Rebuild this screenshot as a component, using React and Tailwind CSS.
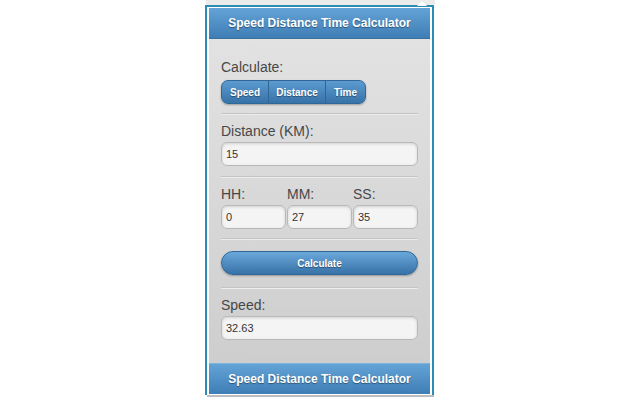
import React from "react";

const Divider = ({ className = "" }) => (
  <div className={"h-px bg-[#c4c4c4] border-b border-[#ececec] box-content " + className} />
);

const Field = ({ value, className = "" }) => (
  <div
    className={
      "h-[24px] rounded-[6px] border border-[#b9b9b9] bg-[#f4f4f4] shadow-[inset_0_1px_3px_rgba(0,0,0,0.15)] px-[4px] flex items-center text-[11px] text-[#333] " +
      className
    }
  >
    {value}
  </div>
);

const Label = ({ children, className = "" }) => (
  <div className={"text-[14px] text-[#474747] leading-none " + className}>{children}</div>
);

const App = () => {
  return (
    <div
      className="w-[640px] h-[400px] bg-white relative overflow-hidden"
      style={{ fontFamily: '"Liberation Sans", Arial, sans-serif' }}
    >
      <div className="ml-[206px] w-[229px] h-[5px] bg-[#ebebeb]" />
      {/* outer frame */}
      <div className="ml-[205px] w-[229px] border-l-2 border-r-2 border-t-2 border-[#2b8db3] bg-white h-[390px] pt-[1px] px-[2px]">
        <div className="flex flex-col h-[386px] bg-gradient-to-b from-[#e4e4e4] to-[#cccccc]">
          <div className="h-[31px] bg-gradient-to-b from-[#64a3d6] to-[#3f7db6] border-b border-[#3a6f9e] flex items-center justify-center text-white font-bold text-[12px] [text-shadow:0_1px_1px_rgba(0,0,0,0.4)]">
            Speed Distance Time Calculator
          </div>

          <div className="flex-1 px-[12px] pt-[21px]">
            <Label>Calculate:</Label>
            <div className="mt-[6px] inline-flex h-[24px] rounded-[7px] border border-[#2f6898] overflow-hidden bg-gradient-to-b from-[#5b9bd0] to-[#3873a8] shadow-[0_1px_2px_rgba(0,0,0,0.3)] text-white font-bold text-[10px] [text-shadow:0_1px_1px_rgba(0,0,0,0.4)]">
              <div className="w-[47px] flex items-center justify-center border-r border-[#2e6592]">Speed</div>
              <div className="w-[57px] flex items-center justify-center border-r border-[#2e6592]">Distance</div>
              <div className="w-[39px] flex items-center justify-center">Time</div>
            </div>

            <Divider className="mt-[9px]" />

            <Label className="mt-[9px]">Distance (KM):</Label>
            <Field value="15" className="mt-[4px]" />

            <Divider className="mt-[10px]" />

            <div className="grid grid-cols-3 gap-x-[1px] mt-[9px]">
              <Label>HH:</Label>
              <Label>MM:</Label>
              <Label>SS:</Label>
              <Field value="0" className="mt-[4px]" />
              <Field value="27" className="mt-[4px]" />
              <Field value="35" className="mt-[4px]" />
            </div>

            <Divider className="mt-[9px]" />

            <div className="mt-[11px] h-[24px] rounded-full border border-[#2f6898] bg-gradient-to-b from-[#6aa7da] to-[#3873a8] shadow-[0_1px_2px_rgba(0,0,0,0.3)] flex items-center justify-center text-white font-bold text-[10px] [text-shadow:0_1px_1px_rgba(0,0,0,0.4)]">
              Calculate
            </div>

            <Divider className="mt-[12px]" />

            <Label className="mt-[9px]">Speed:</Label>
            <Field value="32.63" className="mt-[4px]" />
          </div>

          <div className="h-[31px] bg-gradient-to-b from-[#64a3d6] to-[#3f7db6] border-t border-[#7fb3de] flex items-center justify-center text-white font-bold text-[12px] [text-shadow:0_1px_1px_rgba(0,0,0,0.4)]">
            Speed Distance Time Calculator
          </div>
        </div>
      </div>
      <div className="ml-[207px] w-[227px] h-[2px] bg-[#bdbdbd]" />
      {/* popup arrow */}
      <div className="absolute left-[417px] top-[1px] w-0 h-0 border-l-[5px] border-r-[5px] border-b-[5px] border-l-transparent border-r-transparent border-b-white" />
    </div>
  );
};

export default App;
